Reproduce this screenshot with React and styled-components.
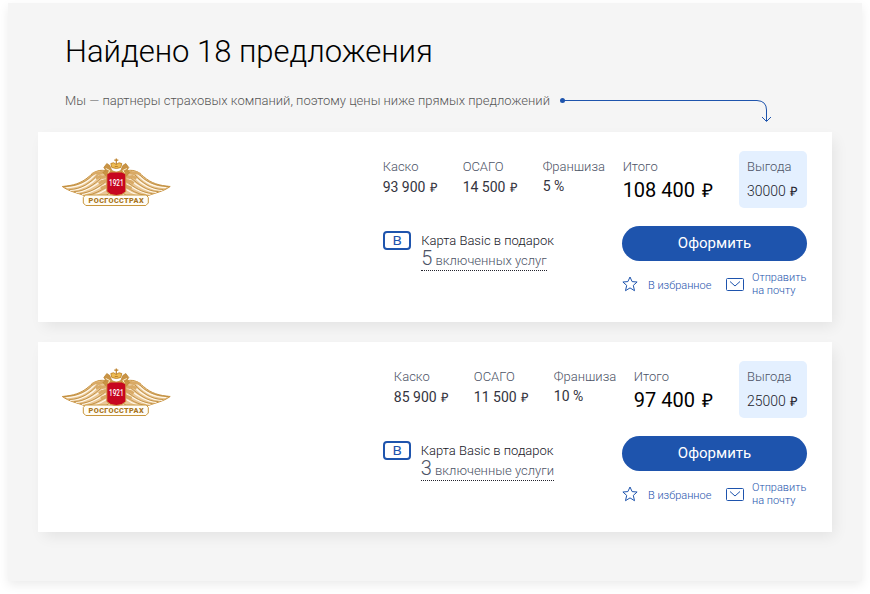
import React from "react";
import styled, { createGlobalStyle } from "styled-components";

const GlobalStyle = createGlobalStyle`
  * { box-sizing: border-box; }
  body { margin: 0; background: #fff; font-family: Roboto, "Liberation Sans", sans-serif; }
`;

const Page = styled.div`
  display: flex;
  align-items: flex-start;
  height: 594px;
  padding: 3px 0 0 8px;
  overflow: hidden;
`;

const Panel = styled.main`
  width: 854px;
  height: 578px;
  padding: 29px 30px 0;
  background: #f5f5f5;
  box-shadow: 0 4px 10px rgba(0, 0, 0, 0.08);
`;

const Title = styled.h1`
  margin: 0 0 0 27px;
  font-size: 31px;
  font-weight: 300;
  line-height: 40px;
  letter-spacing: -0.02px;
  color: #000;
  white-space: nowrap;
`;

const Note = styled.div`
  display: flex;
  align-items: flex-start;
  height: 40px;
  margin: 20px 0 0 27px;
`;

const NoteText = styled.p`
  width: 494px;
  margin: 0;
  font-size: 13px;
  font-weight: 300;
  line-height: 18px;
  color: #555;
  white-space: nowrap;
`;

const Arrow = styled.svg`
  flex: none;
  margin-top: 3px;
`;

const CardList = styled.div`
  display: grid;
  gap: 20px;
`;

const Card = styled.article`
  display: flex;
  justify-content: space-between;
  height: 190px;
  padding: 19px 25px 0 23px;
  background: #fff;
  box-shadow: 4px 6px 14px -2px rgba(0, 0, 0, 0.08);
`;

const Logo = styled.svg`
  display: block;
  margin-top: 6px;
`;

const Offer = styled.div`
  display: flex;
  flex-direction: column;
  align-items: flex-end;
  gap: 18px;
`;

const Prices = styled.div`
  display: flex;
  height: 57px;
  padding-top: 6px;
`;

const Price = styled.div`
  width: 80px;
  white-space: nowrap;
`;

const Total = styled.div`
  margin-right: 26px;
  white-space: nowrap;
`;

const Label = styled.div`
  font-size: 13px;
  font-weight: 300;
  line-height: 20px;
  color: #4c5366;
`;

const Value = styled.div`
  font-size: 14px;
  font-weight: 400;
  line-height: 20px;
  color: #34343e;
  margin-top: ${(p) => (p.$raised ? "-1px" : "0")};
`;

const TotalValue = styled.div`
  font-size: 20px;
  font-weight: 400;
  line-height: 26px;
  color: #000;
`;

const Benefit = styled.div`
  width: 68px;
  height: 57px;
  margin-top: -6px;
  padding: 6px 0 0 8px;
  border-radius: 5px;
  background: #e4f0ff;
  white-space: nowrap;
`;

const BenefitValue = styled.div`
  margin-top: 4px;
  font-size: 14px;
  font-weight: 300;
  line-height: 20px;
  color: #23232d;
`;

const RubleSign = styled.span`
  margin-left: ${(p) => (p.$large ? "2px" : "1px")};
  font-family: "Liberation Sans", sans-serif;
  font-size: ${(p) => (p.$large ? "19px" : "13px")};
  line-height: 1;
  font-weight: 400;
`;

const Lower = styled.div`
  display: flex;
  gap: 68px;
`;

const Gift = styled.div`
  display: flex;
  gap: 10px;
  padding-top: 5px;
`;

const GiftBadge = styled.span`
  display: flex;
  align-items: center;
  justify-content: center;
  width: 28px;
  height: 19px;
  border: 2px solid #1e54ad;
  border-radius: 4px;
`;

const GiftText = styled.div`
  font-size: 13px;
  font-weight: 300;
  line-height: 19px;
  color: #16161f;
  white-space: nowrap;
`;

const Services = styled.a`
  display: block;
  width: fit-content;
  height: 21px;
  line-height: 17px;
  border-bottom: 1px dotted #23232d;
  color: #4c5366;
`;

const Count = styled.span`
  font-size: 20px;
`;

const BadgeLetter = styled.span`
  font-size: 13px;
  line-height: 15px;
  font-weight: 400;
  transform: scaleX(1.15);
  color: #1e54ad;
`;

const Actions = styled.div`
  width: 185px;
`;

const SubmitButton = styled.button`
  display: block;
  width: 185px;
  height: 35px;
  padding: 0 0 1px;
  border: 0;
  border-radius: 18px;
  background: #1e54ad;
  color: #fff;
  font: 400 15px/34px Roboto, sans-serif;
`;

const Links = styled.div`
  display: flex;
  align-items: center;
  height: 26px;
  margin-top: 10px;
`;

const LinkText = styled.a`
  width: ${(p) => p.$width}px;
  margin-top: ${(p) => (p.$lowered ? "2px" : "0")};
  font-size: 11px;
  font-weight: 300;
  line-height: 13px;
  color: #1e54ad;
  white-space: nowrap;
`;

const StarIcon = styled.svg`
  flex: none;
  margin-right: 10px;
`;

const MailIcon = styled.svg`
  flex: none;
  margin-right: 8px;
`;

const wing = (
  <g>
    <path d="M44 13C36 12 33 15 28 19C20 26 12 28 1 29C8 34 15 35 23 38C27 40 33 42 40 42L48 36V20C48 16 46 13 44 13Z" fill="#e9c796" stroke="#c7913e" strokeWidth="1" />
    <path d="M5 30C18 30 28 24 35 16M9 33C21 33 31 26 39 18M15 35C26 34 35 28 43 21M21 37C31 36 39 30 46 26M27 39C36 38 42 34 47 31" fill="none" stroke="#fff7e8" strokeWidth="1.2" />
    <path d="M3 29C17 29 27 23 33 16M8 32C20 32 30 25 37 17M13 34C24 34 33 27 41 20M19 36C30 35 37 30 45 24M25 38C34 37 41 32 47 29" fill="none" stroke="#b98634" strokeWidth=".8" />
    <path d="M31 17L35 15L38 16L43 14M35 21L39 19L42 20L46 18M38 26L41 24L47 23M40 31L47 28" fill="none" stroke="#d9aa66" strokeWidth="3" />
  </g>
);

function InsurerLogo() {
  return (
    <Logo width="110" height="50" viewBox="0.200 -0.500 110 50" aria-label="Росгосстрах">
      <g transform="translate(.5 0) scale(.99 1)">
        {wing}
        <g transform="matrix(-1 0 0 1 111 0)">{wing}</g>
      </g>
      <path d="M46 19L42 15L45 13L43 10L46 6L49 8L51 13L55.500 15L60 13L62 8L65 6L68 10L66 13L69 15L65 19Z" fill="#c99345" stroke="#b8812e" strokeWidth=".7" />
      <path d="M45 11L49 13L47 16M66 11L62 13L64 16" fill="none" stroke="#fff1cf" strokeWidth="1" />
      <path d="M51 10L50 6Q53 4 55.500 7Q58 4 61 6L60 10Q55.500 12 51 10Z" fill="#edbb52" stroke="#b77b20" strokeWidth=".8" />
      <path d="M55.500 1V7M53.500 2.700H57.500M54 9H57" stroke="#bc812c" strokeWidth="1.2" />
      <path d="M24.500 37.500H85.500L87.500 40V45.500L85 48H25L22.500 45.500V40Z" fill="#fffdf6" stroke="#c8963c" />
      <path d="M46 16.500L50 14.500H61L65 16.500V34L61 37Q55.500 39 50 37L46 34Z" fill="#c70720" stroke="#d39a48" />
      <text x="55.500" y="28.500" textAnchor="middle" textLength="14.500" lengthAdjust="spacingAndGlyphs" fontFamily="Roboto" fontSize="9" fontWeight="500" fill="#fff">1921</text>
      <text x="55.300" y="45.500" textAnchor="middle" textLength="55" fontFamily="Roboto" fontSize="7.300" fontWeight="900" fill="#a87520">РОСГОССТРАХ</text>
    </Logo>
  );
}

function Amount({ children, large }) {
  return <>{children} <RubleSign $large={large}>₽</RubleSign></>;
}

function OfferCard({ kasko, osago, franchise, total, benefit, count, services }) {
  return (
    <Card>
      <InsurerLogo />
      <Offer>
        <Prices>
          <Price><Label>Каско</Label><Value><Amount>{kasko}</Amount></Value></Price>
          <Price><Label>ОСАГО</Label><Value><Amount>{osago}</Amount></Value></Price>
          <Price><Label>Франшиза</Label><Value $raised>{franchise}</Value></Price>
          <Total><Label>Итого</Label><TotalValue><Amount large>{total}</Amount></TotalValue></Total>
          <Benefit><Label>Выгода</Label><BenefitValue><Amount>{benefit}</Amount></BenefitValue></Benefit>
        </Prices>
        <Lower>
          <Gift>
            <GiftBadge><BadgeLetter>B</BadgeLetter></GiftBadge>
            <GiftText>
              Карта Basic в подарок
              <Services><Count>{count}</Count> {services}</Services>
            </GiftText>
          </Gift>
          <Actions>
            <SubmitButton>Оформить</SubmitButton>
            <Links>
              <StarIcon width="16" height="16" viewBox="0 0 16 16" fill="none" stroke="#1e54ad" strokeLinejoin="round">
                <path d="M8 1L10.100 5.600L15.100 6L11.300 9.400L12.500 14.700L8 11.900L3.500 14.700L4.700 9.400L.9 6L5.900 5.600Z" />
              </StarIcon>
              <LinkText $width={78} $lowered>В избранное</LinkText>
              <MailIcon width="18" height="13" viewBox="0 0 18 13" fill="none" stroke="#1e54ad">
                <rect x=".5" y=".5" width="17" height="12" rx="1" />
                <path d="M4 3.500L9 8L14 3.500" />
              </MailIcon>
              <LinkText $width={55}>Отправить<br />на почту</LinkText>
            </Links>
          </Actions>
        </Lower>
      </Offer>
    </Card>
  );
}

const offers = [
  { kasko: "93 900", osago: "14 500", franchise: "5 %", total: "108 400", benefit: "30000", count: 5, services: "включенных услуг" },
  { kasko: "85 900", osago: "11 500", franchise: "10 %", total: "97 400", benefit: "25000", count: 3, services: "включенные услуги" },
];

export default function App() {
  return (
    <Page>
      <GlobalStyle />
      <Panel>
        <Title>Найдено 18 предложения</Title>
        <Note>
          <NoteText>Мы — партнеры страховых компаний, поэтому цены ниже прямых предложений</NoteText>
          <Arrow width="214" height="28" viewBox="0 0 214 28" fill="none" stroke="#1e54ad">
            <circle cx="3.500" cy="5.500" r="2.500" fill="#1e54ad" stroke="none" />
            <path d="M3 5.500H198Q207.500 6 207.500 15V26M203 22L207.500 26.500L212 22" />
          </Arrow>
        </Note>
        <CardList>
          {offers.map((offer) => <OfferCard key={offer.total} {...offer} />)}
        </CardList>
      </Panel>
    </Page>
  );
}
